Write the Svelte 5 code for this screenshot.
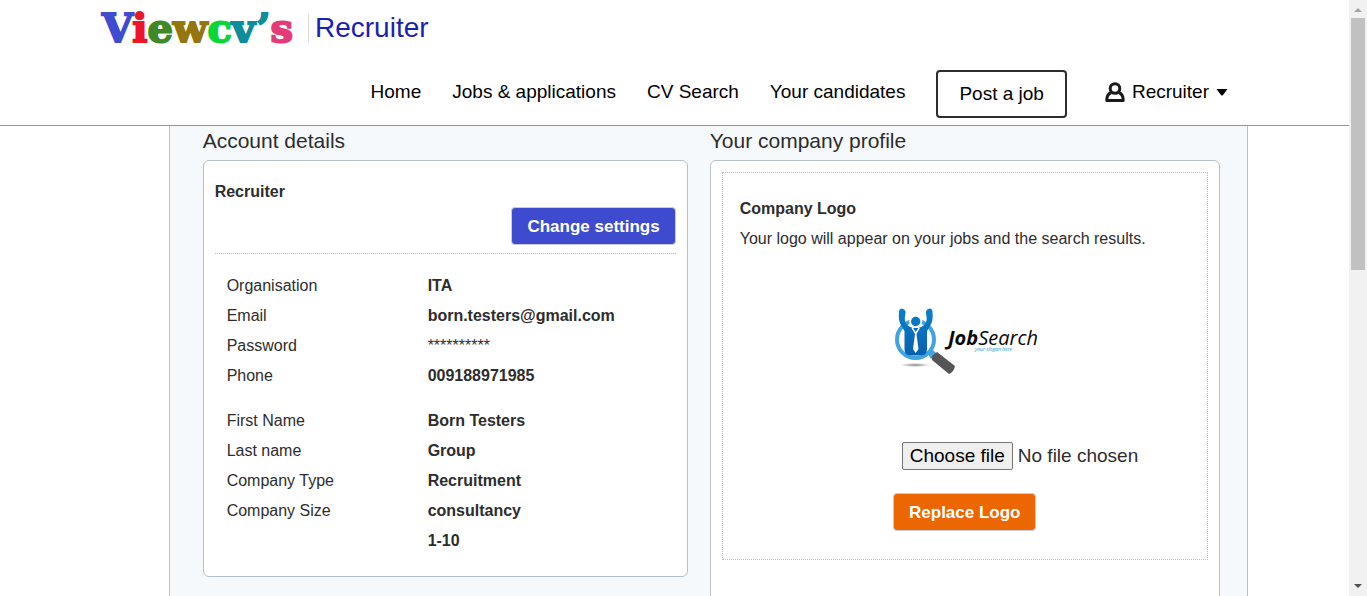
<script>
  const brand = [
    ['V', '#3f4ccf'], ['i', '#ee1528'], ['e', '#3f8a28'], ['w', '#94760e'],
    ['c', '#0bd637'], ['v', '#0d8e9c'], ['’', '#0d8e9c'], ['s', '#e53a78']
  ];
  const links = ['Home', 'Jobs & applications', 'CV Search', 'Your candidates'];
  const groups = [
    {
      labels: ['Organisation', 'Email', 'Password', 'Phone'],
      values: ['ITA', 'born.testers@gmail.com', '**********', '009188971985']
    },
    {
      labels: ['First Name', 'Last name', 'Company Type', 'Company Size'],
      values: ['Born Testers', 'Group', 'Recruitment', 'consultancy', '1-10']
    }
  ];
  let fileName = $state('No file chosen');
  function pick(e) {
    fileName = e.currentTarget.files[0]?.name ?? 'No file chosen';
  }
</script>

<div class="window">
  <div class="page">
    <header>
      <a class="brand" href="#home">
        <span class="name">{#each brand as [ch, color]}<span style:color={color}>{ch}</span>{/each}</span>
        <span class="product">Recruiter</span>
      </a>
      <nav>
        {#each links as link}<a href="#nav">{link}</a>{/each}
        <a class="post" href="#post">Post a job</a>
        <button class="user" type="button">
          <svg width="20" height="22" viewBox="0 0 20 22" fill="none" stroke="#1a1a1a" stroke-width="3">
            <path d="M6.2 11.8C3 12.600 1.800 15 1.800 19.500H18.200C18.200 15 17 12.600 13.800 11.800" stroke-linejoin="round" />
            <circle cx="10" cy="7.500" r="4.800" />
          </svg>
          <span>Recruiter</span>
          <svg class="caret" width="12" height="8" viewBox="0 0 12 8"><path d="M.5 1H11.5L7 7Q6 8 5 7Z" /></svg>
        </button>
      </nav>
    </header>

    <main>
      <section>
        <h2>Account details</h2>
        <div class="card account">
          <h3>Recruiter</h3>
          <div class="actions"><button class="btn blue" type="button">Change settings</button></div>
          <div class="details">
            {#each groups as g}
              <div class="group">
                <ul>{#each g.labels as l}<li>{l}</li>{/each}</ul>
                <ul class="values">{#each g.values as v}<li class:mask={v[0] === '*'}>{v}</li>{/each}</ul>
              </div>
            {/each}
          </div>
        </div>
      </section>

      <section>
        <h2>Your company profile</h2>
        <div class="card company">
          <div class="logo-box">
            <h3>Company Logo</h3>
            <p>Your logo will appear on your jobs and the search results.</p>
            <svg class="logo" width="144" height="70" viewBox="0 0 144 70" role="img" aria-label="JobSearch">
              <defs>
                <radialGradient id="shade"><stop offset="0" stop-color="#888" /><stop offset="1" stop-color="#fff" /></radialGradient>
                <linearGradient id="suit" x2="0" y2="1"><stop offset="0" stop-color="#0a80cc" /><stop offset="1" stop-color="#0860ad" /></linearGradient>
              </defs>
              <g transform="translate(1 -1)">
                <ellipse cx="21" cy="59" rx="15" ry="2" fill="url(#shade)" />
                <circle cx="21.500" cy="33.500" r="18.500" fill="#fff" stroke="#3fa4e0" stroke-width="4" />
                <path d="M34 48L39 44L43 48L37 53Z" fill="#3fa4e0" />
                <path d="M38 50L43 46L61 60Q60 66 55 68L38 54Z" fill="#555" />
                <circle cx="21.700" cy="15.500" r="6.500" fill="#fff" />
                <path d="M5 6Q5 2.500 8 2.500Q12 3.500 11.500 7L10.800 12Q10.500 17 14.500 20L21.700 23.500L29 20Q33 17 32.700 12L32 7Q31.500 3.500 35.500 2.500Q38.500 2.500 38.500 6Q39.500 15 36 20L33 25V43Q33 49.500 27 49.500H16.500Q10.500 49.500 10.500 43V25L7.500 20Q4 15 5 6Z" fill="url(#suit)" />
                <path d="M17.500 22H26L22.500 28L24.500 43L21.700 47L19 43L21 28Z" fill="#fff" />
                <path d="M19 22H24.500L21.700 26Z" fill="#0a70bd" />
                <circle cx="21.700" cy="15.500" r="4.700" fill="#0a76c4" />
              </g>
              <text class="word" x="55" y="38"><tspan font-weight="700">Job</tspan>Search</text>
              <text class="slogan" x="82" y="44">your slogan here</text>
            </svg>
            <label class="file">
              <input type="file" onchange={pick} />
              <span class="choose">Choose file</span>
              <span>{fileName}</span>
            </label>
            <button class="btn orange" type="button">Replace Logo</button>
          </div>
        </div>
      </section>
    </main>
  </div>

  <div class="scrollbar" aria-hidden="true">
    <svg width="18" height="18" viewBox="0 0 18 18"><path d="M5 12H13L9 8Z" fill="#a3a3a3" /></svg>
    <div class="track"><div class="thumb"></div></div>
    <svg width="18" height="18" viewBox="0 0 18 18"><path d="M5 6H13L9 10Z" fill="#505050" /></svg>
  </div>
</div>

<style>
  :global(body) { margin: 0; }
  * { box-sizing: border-box; }
  .window {
    display: flex;
    height: 100vh;
    overflow: hidden;
    font: 16px/30px "Liberation Sans", Arial, sans-serif;
    color: #2d2d2d;
    background: #fff;
  }
  .page { flex: 1; min-width: 0; display: flex; flex-direction: column; }
  header { flex: none; border-bottom: 1px solid #949494; padding: 2px 121px 7px 102px; }
  a { color: #000; text-decoration: none; }
  .brand { display: flex; align-items: center; width: max-content; height: 52px; }
  .name { font-family: "DejaVu Serif", serif; font-weight: 700; font-size: 40px; line-height: 52px; -webkit-text-stroke: 2px; }
  .name span { -webkit-text-stroke-color: currentColor; }
  .product { margin-left: 15px; padding-left: 6px; border-left: 1px solid #ddd; font-size: 28px; line-height: 28px; color: #1a20b0; }
  nav { display: flex; justify-content: flex-end; align-items: center; gap: 31px; margin-top: 16px; font-size: 19px; line-height: 24px; }
  nav > a, .user { margin-bottom: 4px; white-space: nowrap; }
  nav .post { margin: 0; padding: 10px 21px; border: 2px solid #2d2d2d; border-radius: 4px; }
  .user { display: flex; align-items: center; gap: 7px; border: 0; padding: 0; margin-left: 7px; background: none; font: inherit; color: #000; }
  main {
    flex: 1;
    width: 80%;
    margin-left: 12.5%;
    padding: 0 27px 0 33px;
    display: grid;
    grid-template-columns: 485fr 510fr;
    column-gap: 22px;
    border: solid #b4c0ca;
    border-width: 0 1px;
    background: #f5f9fc;
    min-height: 0;
  }
  h2 { margin: 0; padding-bottom: 4px; font-size: 21px; line-height: 30px; font-weight: 400; }
  h3 { margin: 0; font-size: 16px; font-weight: 700; }
  .card { background: #fff; border: 1px solid #b4c0ca; border-radius: 6px; padding: 11px; }
  .account { padding: 16px 11px 20px; }
  .actions { display: flex; justify-content: flex-end; padding: 0 0 8px; border-bottom: 1px dotted #bbb; }
  .btn { height: 38px; padding: 1px 15px 0; border: 1px solid #c8ccd8; border-radius: 4px; color: #fff; font: 700 17px "Liberation Sans", Arial, sans-serif; }
  .blue { background: #3f4bce; }
  .orange { background: #ec6602; }
  .details { padding: 17px 12px 0; }
  .group { display: grid; grid-template-columns: 201px 1fr; }
  .group + .group { margin-top: 15px; }
  ul { list-style: none; margin: 0; padding: 0; }
  .values { font-weight: 700; }
  .values .mask { font-weight: 400; }
  .company { min-height: 480px; }
  .logo-box { display: flex; flex-direction: column; align-items: center; padding: 21px 17px 28px; border: 1px dotted #bbb; }
  .logo-box h3, p { align-self: stretch; margin: 0; }
  .logo { margin-top: 53px; }
  .word { font: italic 400 20px "Open Sans", sans-serif; fill: #080808; }
  .slogan { font: italic 400 5px "Open Sans", sans-serif; fill: #2696da; }
  .file { position: relative; align-self: stretch; display: flex; align-items: center; gap: 5px; margin: 65px 0 23px; padding-left: 36%; font-size: 19px; line-height: 24px; }
  .file input { position: absolute; inset: 0; width: 100%; opacity: 0; }
  .choose { padding: 1px 7px; border: 1px solid #767676; border-radius: 2px; background: #efefef; color: #000; }
  .scrollbar { flex: none; width: 18px; display: flex; flex-direction: column; background: #f1f1f1; }
  .track { flex: 1; padding: 0 2px; }
  .thumb { height: 45%; background: #c1c1c1; }
</style>
